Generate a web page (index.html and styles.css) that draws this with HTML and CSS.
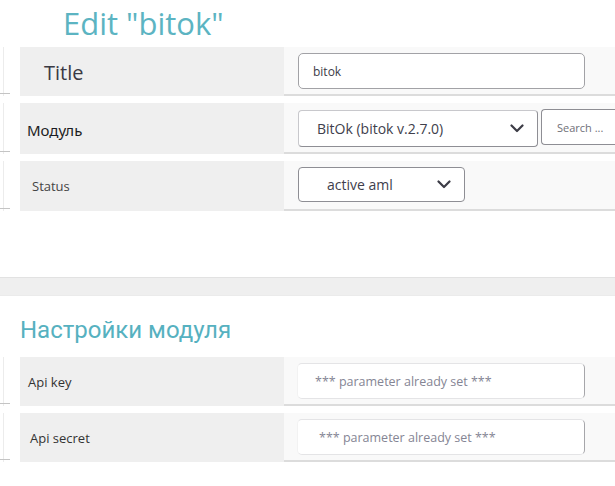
FILE: index.html
```html
<!DOCTYPE html>
<html lang="ru">
<head>
<meta charset="utf-8">
<title>Edit bitok</title>
<link rel="stylesheet" href="styles.css">
</head>
<body>
<div class="page">
  <section class="card">
    <h1 class="title">Edit "bitok"</h1>
    <div class="rows">
      <div class="row r1">
        <div class="gutter"></div>
        <div class="label label-title">Title</div>
        <div class="field f1"><div class="input in-title">bitok</div></div>
      </div>
      <div class="row r2">
        <div class="gutter"></div>
        <div class="label label-mod">Модуль</div>
        <div class="field f2">
          <div class="select sel-mod"><span>BitOk (bitok v.2.7.0)</span>
            <svg class="chev" width="14" height="9" viewBox="0 0 14 9"><path d="M1.5 1.5 L7 7 L12.5 1.5" fill="none" stroke="#3c3c46" stroke-width="2.2" stroke-linecap="round" stroke-linejoin="round"/></svg>
          </div>
          <div class="input search">Search ...</div>
        </div>
      </div>
      <div class="row r3">
        <div class="gutter"></div>
        <div class="label label-status">Status</div>
        <div class="field f3">
          <div class="select sel-status"><span>active aml</span>
            <svg class="chev" width="14" height="9" viewBox="0 0 14 9"><path d="M1.5 1.5 L7 7 L12.5 1.5" fill="none" stroke="#3c3c46" stroke-width="2.2" stroke-linecap="round" stroke-linejoin="round"/></svg>
          </div>
        </div>
      </div>
    </div>
  </section>
  <div class="band"></div>
  <section class="settings">
    <h2 class="subtitle">Настройки модуля</h2>
    <div class="rows">
      <div class="row r4">
        <div class="gutter"></div>
        <div class="label label-api">Api key</div>
        <div class="field f4"><div class="input in-api">*** parameter already set ***</div></div>
      </div>
      <div class="row r5">
        <div class="gutter"></div>
        <div class="label label-api2">Api secret</div>
        <div class="field f4"><div class="input in-api in-api2">*** parameter already set ***</div></div>
      </div>
    </div>
  </section>
</div>
</body>
</html>
```
FILE: styles.css
```css
* { box-sizing: border-box; }
html, body { margin: 0; padding: 0; background: #fff; }
body { font-family: "Open Sans", "Noto Sans", sans-serif; color: #3c3c48; width: 615px; height: 486px; overflow: hidden; }

.page { width: 615px; }

.card { height: 277px; background: #fff; }

.title {
  margin: 0;
  height: 47px;
  padding: 8px 0 0 63px;
  font-size: 31px;
  line-height: 31px;
  font-weight: 400;
  color: #5cb4c2;
}

.rows { display: flex; flex-direction: column; gap: 7px; }

.row { display: grid; grid-template-columns: 20px 264px 1fr; }
.r1 { height: 49px; }
.r2 { height: 51px; }
.r3 { height: 50px; }
.r4 { height: 49px; }
.r5 { height: 49px; }

.gutter { position: relative; border-left: 1px solid #ececec; margin-left: 3px; }
.gutter::after { content: ""; position: absolute; left: -4px; bottom: 2px; width: 10px; height: 1px; background: #c4c4c4; }

.label {
  background: #efefef;
  display: flex;
  align-items: center;
  color: #3a3a44;
}
.label-title { font-size: 20px; padding-left: 24px; padding-top: 2px; }
.label-mod { font-size: 15px; padding-left: 7px; color: #1c1c22; font-family: "Noto Sans", "Open Sans", sans-serif; padding-top: 2px; }
.label-status { font-size: 13px; padding-left: 12px; color: #444; }
.label-api { font-size: 13px; padding-left: 8px; color: #333; }
.label-api2 { font-size: 13px; padding-left: 10px; color: #333; }

.field {
  background: #f9f9f9;
  border-bottom: 2px solid #dcdcdc;
  padding-left: 14px;
  display: flex;
  align-items: flex-start;
}
.f1 { padding-top: 6px; }
.f2 { padding-top: 7px; gap: 3px; }
.f3 { padding-top: 6px; }
.f4 { padding-top: 6px; padding-left: 13px; }

.input {
  background: #fff;
  border: 1px solid #a2a2a6;
  border-radius: 5px;
  display: flex;
  align-items: center;
}
.in-title { width: 287px; height: 36px; padding-left: 14px; font-size: 12px; color: #3c3c48; }
.search { width: 80px; height: 36px; margin-top: -1px; padding-left: 15px; font-size: 11px; color: #707078; border-radius: 4px 0 0 4px; border-right: none; border-color: #8e8e94; }

.select {
  background: #fff;
  border: 1px solid #8e8e94;
  border-radius: 4px;
  display: flex;
  align-items: center;
  justify-content: space-between;
  font-size: 14px;
  color: #40404c;
}
.sel-mod { width: 240px; height: 37px; padding: 0 13px 0 18px; border-top-color: #c8c8cc; border-left-color: #c8c8cc; }
.sel-status { width: 167px; height: 35px; padding: 0 13px 0 28px; }
.chev { display: block; }

.band { height: 19px; background: #efefef; border-top: 1px solid #e2e2e2; border-bottom: 1px solid #ebebeb; }

.settings { padding-top: 20px; }
.subtitle {
  margin: 0 0 13px 0;
  padding-left: 20px;
  font-family: "Roboto", "Noto Sans", sans-serif;
  font-weight: 400;
  font-size: 24px;
  line-height: 28px;
  color: #56b1c0;
}
.settings .rows { gap: 7px; }

.in-api { width: 288px; height: 36px; padding-left: 17px; font-size: 12.5px; color: #858594; border-color: #a6a6aa; border-left-color: #f2f2f2; border-top-color: #e4e4e6; border-bottom-color: #e4e4e6; }
.in-api2 { padding-left: 21px; }
```
